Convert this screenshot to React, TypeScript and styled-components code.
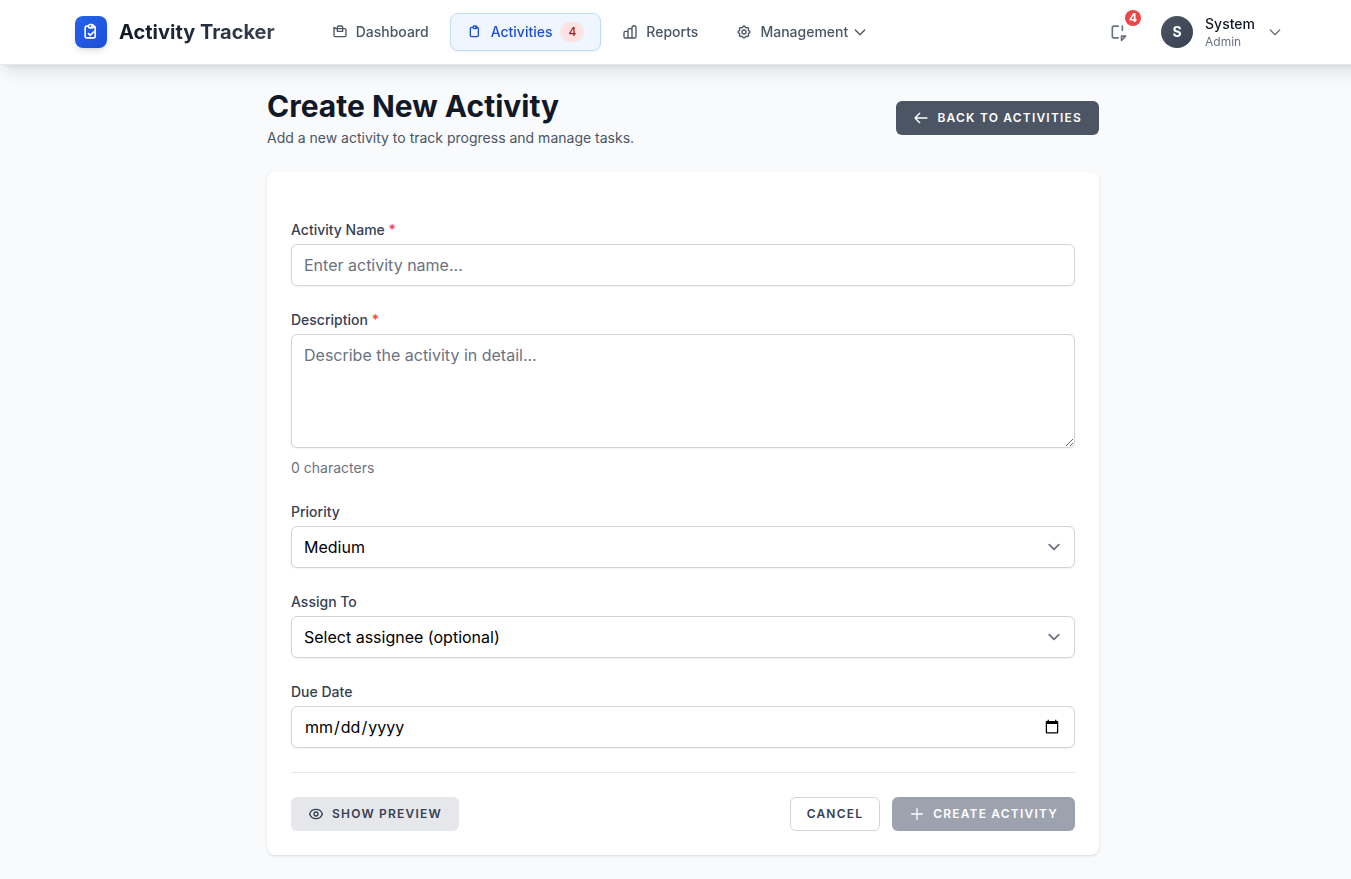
import React from "react";
import styled, { createGlobalStyle, css } from "styled-components";

const GlobalStyle = createGlobalStyle`
  *, *::before, *::after { box-sizing: border-box; }
  html, body { margin: 0; padding: 0; overflow-x: hidden; }
  body { background: #f8fafc; font-family: Inter, "Liberation Sans", sans-serif; font-size: 16px; line-height: 24px; color: #111827; }
  button, input, select, textarea { font: inherit; letter-spacing: inherit; margin: 0; }
`;

const Page = styled.div`
  width: 1366px;
  min-height: 879px;
  background: #f8fafc;
`;

const Header = styled.header`
  position: relative;
  z-index: 2;
  height: 65px;
  background: rgba(255, 255, 255, 0.95);
  backdrop-filter: blur(8px);
  border-bottom: 1px solid #e5e7eb;
  box-shadow: 0 10px 15px -3px rgba(0, 0, 0, 0.1), 0 4px 6px -4px rgba(0, 0, 0, 0.1);
`;

const HeaderInner = styled.div`
  max-width: 1280px;
  height: 64px;
  margin: 0 auto;
  padding: 0 32px;
  display: flex;
  align-items: center;
  justify-content: space-between;
`;

const Group = styled.div<{ $gap: number }>`
  display: flex;
  align-items: center;
  gap: ${(p) => p.$gap}px;
`;

const LogoTile = styled.div`
  width: 32px;
  height: 32px;
  border-radius: 8px;
  display: flex;
  align-items: center;
  justify-content: center;
  color: #fff;
  background: linear-gradient(to bottom right, #2563eb, #1d4ed8);
  box-shadow: 0 4px 6px -1px rgba(0, 0, 0, 0.1), 0 2px 4px -2px rgba(0, 0, 0, 0.1);
`;

const BrandName = styled.span`
  font-size: 20px;
  line-height: 28px;
  font-weight: 700;
  color: transparent;
  background: linear-gradient(to right, #111827, #374151);
  background-clip: text;
  -webkit-background-clip: text;
`;

const Nav = styled.nav`
  display: flex;
  gap: 4px;
`;

const NavItem = styled.a<{ $active?: boolean }>`
  display: flex;
  align-items: center;
  padding: 8px 16px;
  border: 1px solid transparent;
  border-radius: 8px;
  font-size: 14px;
  line-height: 20px;
  font-weight: 500;
  color: #4b5563;
  ${(p) =>
    p.$active &&
    css`
      color: #1d4ed8;
      background: #eff6ff;
      border-color: #bfdbfe;
      box-shadow: 0 1px 2px rgba(0, 0, 0, 0.05);
    `}
`;

const NavLabel = styled.span`
  margin-left: 8px;
`;

const Count = styled.span`
  margin-left: 8px;
  padding: 2px 8px;
  border-radius: 999px;
  font-size: 12px;
  line-height: 16px;
  color: #991b1b;
  background: #fee2e2;
`;

const CaretGap = styled.span`
  display: flex;
  margin-left: 4px;
`;

const BellButton = styled.button`
  position: relative;
  display: flex;
  padding: 8px;
  border: 0;
  background: none;
  color: #6b7280;
`;

const BellCount = styled.span`
  position: absolute;
  top: -4px;
  right: -4px;
  width: 16px;
  height: 16px;
  border-radius: 50%;
  background: #ef4444;
  color: #fff;
  font-size: 12px;
  line-height: 16px;
  font-weight: 700;
  text-align: center;
`;

const UserMenu = styled.div`
  display: flex;
  align-items: center;
  gap: 12px;
  padding: 0 8px;
  color: #6b7280;
`;

const Avatar = styled.div`
  width: 32px;
  height: 32px;
  border-radius: 50%;
  background: linear-gradient(to bottom right, #4b5563, #374151);
  color: #fff;
  font-size: 14px;
  line-height: 32px;
  font-weight: 700;
  text-align: center;
`;

const UserName = styled.div`
  font-size: 14px;
  line-height: 20px;
  font-weight: 500;
  color: #111827;
`;

const UserRole = styled.div`
  font-size: 12px;
  line-height: 16px;
  color: #6b7280;
`;

const Main = styled.main`
  width: 896px;
  margin: 0 auto;
  padding: 23px 32px 24px;
`;

const TitleRow = styled.div`
  display: flex;
  align-items: center;
  justify-content: space-between;
  margin-bottom: 24px;
`;

const Title = styled.h1`
  margin: 0;
  font-size: 30px;
  line-height: 36px;
  font-weight: 700;
  color: #111827;
`;

const Subtitle = styled.p`
  margin: 4px 0 0;
  font-size: 14px;
  line-height: 20px;
  color: #4b5563;
`;

type Variant = "dark" | "soft" | "outline" | "disabled";

const variants: Record<Variant, ReturnType<typeof css>> = {
  dark: css`background: #4b5563; color: #fff;`,
  soft: css`background: #e5e7eb; color: #374151;`,
  outline: css`background: #fff; color: #374151; border-color: #d1d5db;`,
  disabled: css`background: #9ca3af; color: #fff;`,
};

const Button = styled.button<{ $variant: Variant }>`
  && {
    display: inline-flex;
    align-items: center;
    gap: 8px;
    height: 34px;
    padding: 8px 16px;
    border: 1px solid transparent;
    border-radius: 6px;
    font-size: 12px;
    line-height: 16px;
    font-weight: 600;
    letter-spacing: 0.1em;
    text-transform: uppercase;
    ${(p) => variants[p.$variant]}
  }
`;

const Card = styled.form`
  padding: 48px 24px 24px;
  background: #fff;
  border-radius: 8px;
  box-shadow: 0 1px 3px rgba(0, 0, 0, 0.1), 0 1px 2px -1px rgba(0, 0, 0, 0.1);
`;

const Field = styled.div`
  display: flex;
  flex-direction: column;
  margin-bottom: 24px;
`;

const Label = styled.label`
  margin-bottom: 4px;
  font-size: 14px;
  line-height: 20px;
  font-weight: 500;
  color: #374151;
`;

const Required = styled.span`
  color: #ef4444;
`;

const control = css`
  width: 100%;
  height: 42px;
  padding: 8px 12px;
  border: 1px solid #d1d5db;
  border-radius: 6px;
  background: #fff;
  color: #000;
  font-size: 16px;
  line-height: 24px;
  box-shadow: 0 1px 2px rgba(0, 0, 0, 0.05);
  appearance: none;
  outline: none;
  &::placeholder { color: #6b7280; opacity: 1; }
`;

const TextInput = styled.input`
  ${control}
  &::-webkit-datetime-edit { padding: 0; }
  &::-webkit-date-and-time-value { min-height: 1.5em; }
`;

const TextArea = styled.textarea`
  ${control}
  height: 114px;
  resize: vertical;
`;

const Select = styled.select`
  ${control}
`;

const SelectWrap = styled.div`
  position: relative;
`;

const SelectCaret = styled.span`
  position: absolute;
  top: 9px;
  right: 9px;
  display: flex;
  color: #6b7280;
  pointer-events: none;
`;

const Hint = styled.p`
  margin: 10px 0 0;
  font-size: 14px;
  line-height: 20px;
  color: #6b7280;
`;

const Actions = styled.div`
  display: flex;
  justify-content: space-between;
  padding-top: 24px;
  border-top: 1px solid #e5e7eb;
`;

const icons = {
  clipboardCheck: [
    "M9 5H7a2 2 0 00-2 2v10a2 2 0 002 2h8a2 2 0 002-2V7a2 2 0 00-2-2h-2M9 5a2 2 0 002 2h2a2 2 0 002-2M9 5a2 2 0 012-2h2a2 2 0 012 2m-6 9l2 2 4-4",
  ],
  clipboard: [
    "M9 5H7a2 2 0 00-2 2v10a2 2 0 002 2h8a2 2 0 002-2V7a2 2 0 00-2-2h-2M9 5a2 2 0 002 2h2a2 2 0 002-2M9 5a2 2 0 012-2h2a2 2 0 012 2",
  ],
  dashboard: [
    "M3 7v10a2 2 0 002 2h14a2 2 0 002-2V9a2 2 0 00-2-2H5a2 2 0 00-2-2z",
    "M8 5a2 2 0 012-2h4a2 2 0 012 2v6H8V5z",
  ],
  chart: [
    "M9 19v-6a2 2 0 00-2-2H5a2 2 0 00-2 2v6a2 2 0 002 2h2a2 2 0 002-2zm0 0V9a2 2 0 012-2h2a2 2 0 012 2v10m-6 0a2 2 0 002 2h2a2 2 0 002-2m0 0V5a2 2 0 012-2h2a2 2 0 012 2v14a2 2 0 01-2 2h-2a2 2 0 01-2-2z",
  ],
  cog: [
    "M10.325 4.317c.426-1.756 2.924-1.756 3.35 0a1.724 1.724 0 002.573 1.066c1.543-.94 3.31.826 2.37 2.37a1.724 1.724 0 001.065 2.572c1.756.426 1.756 2.924 0 3.35a1.724 1.724 0 00-1.066 2.573c.94 1.543-.826 3.31-2.37 2.37a1.724 1.724 0 00-2.572 1.065c-.426 1.756-2.924 1.756-3.35 0a1.724 1.724 0 00-2.573-1.066c-1.543.94-3.31-.826-2.37-2.37a1.724 1.724 0 00-1.065-2.572c-1.756-.426-1.756-2.924 0-3.35a1.724 1.724 0 001.066-2.573c-.94-1.543.826-3.31 2.37-2.37.996.608 2.296.07 2.572-1.065z",
    "M15 12a3 3 0 11-6 0 3 3 0 016 0z",
  ],
  chevron: ["M19 9l-7 7-7-7"],
  notify: ["M15 17h5l-5 5v-5zM11 19H6a2 2 0 01-2-2V7a2 2 0 012-2h5m5 0v5"],
  arrowLeft: ["M10 19l-7-7m0 0l7-7m-7 7h18"],
  eye: [
    "M15 12a3 3 0 11-6 0 3 3 0 016 0z",
    "M2.458 12C3.732 7.943 7.523 5 12 5c4.478 0 8.268 2.943 9.542 7-1.274 4.057-5.064 7-9.542 7-4.477 0-8.268-2.943-9.542-7z",
  ],
  plus: ["M12 4v16m8-8H4"],
};

function Icon({ name, size = 16 }: { name: keyof typeof icons; size?: number }) {
  return (
    <svg width={size} height={size} viewBox="0 0 24 24" fill="none" stroke="currentColor" strokeWidth={2} strokeLinecap="round" strokeLinejoin="round">
      {icons[name].map((d) => (
        <path key={d} d={d} />
      ))}
    </svg>
  );
}

function SelectField({ label, value }: { label: string; value: string }) {
  return (
    <Field>
      <Label>{label}</Label>
      <SelectWrap>
        <Select defaultValue={value}>
          <option>{value}</option>
        </Select>
        <SelectCaret>
          <svg width="24" height="24" viewBox="0 0 20 20" fill="none" stroke="currentColor" strokeWidth={1.5} strokeLinecap="round" strokeLinejoin="round">
            <path d="M6 8l4 4 4-4" />
          </svg>
        </SelectCaret>
      </SelectWrap>
    </Field>
  );
}

export default function App() {
  return (
    <Page>
      <GlobalStyle />
      <Header>
        <HeaderInner>
          <Group $gap={40}>
            <Group $gap={12}>
              <LogoTile>
                <Icon name="clipboardCheck" size={20} />
              </LogoTile>
              <BrandName>Activity Tracker</BrandName>
            </Group>
            <Nav>
              <NavItem>
                <Icon name="dashboard" />
                <NavLabel>Dashboard</NavLabel>
              </NavItem>
              <NavItem $active>
                <Icon name="clipboard" />
                <NavLabel>Activities</NavLabel>
                <Count>4</Count>
              </NavItem>
              <NavItem>
                <Icon name="chart" />
                <NavLabel>Reports</NavLabel>
              </NavItem>
              <NavItem>
                <Icon name="cog" />
                <NavLabel>Management</NavLabel>
                <CaretGap>
                  <Icon name="chevron" />
                </CaretGap>
              </NavItem>
            </Nav>
          </Group>
          <Group $gap={16}>
            <BellButton type="button">
              <Icon name="notify" size={20} />
              <BellCount>4</BellCount>
            </BellButton>
            <UserMenu>
              <Avatar>S</Avatar>
              <div>
                <UserName>System</UserName>
                <UserRole>Admin</UserRole>
              </div>
              <Icon name="chevron" />
            </UserMenu>
          </Group>
        </HeaderInner>
      </Header>
      <Main>
        <TitleRow>
          <div>
            <Title>Create New Activity</Title>
            <Subtitle>Add a new activity to track progress and manage tasks.</Subtitle>
          </div>
          <Button type="button" $variant="dark">
            <Icon name="arrowLeft" />
            Back to Activities
          </Button>
        </TitleRow>
        <Card>
          <Field>
            <Label>
              Activity Name <Required>*</Required>
            </Label>
            <TextInput type="text" placeholder="Enter activity name..." />
          </Field>
          <Field>
            <Label>
              Description <Required>*</Required>
            </Label>
            <TextArea placeholder="Describe the activity in detail..." />
            <Hint>0 characters</Hint>
          </Field>
          <SelectField label="Priority" value="Medium" />
          <SelectField label="Assign To" value="Select assignee (optional)" />
          <Field>
            <Label>Due Date</Label>
            <TextInput type="date" />
          </Field>
          <Actions>
            <Button type="button" $variant="soft">
              <Icon name="eye" />
              Show Preview
            </Button>
            <Group $gap={12}>
              <Button type="button" $variant="outline">
                Cancel
              </Button>
              <Button type="button" $variant="disabled">
                <Icon name="plus" />
                Create Activity
              </Button>
            </Group>
          </Actions>
        </Card>
      </Main>
    </Page>
  );
}
